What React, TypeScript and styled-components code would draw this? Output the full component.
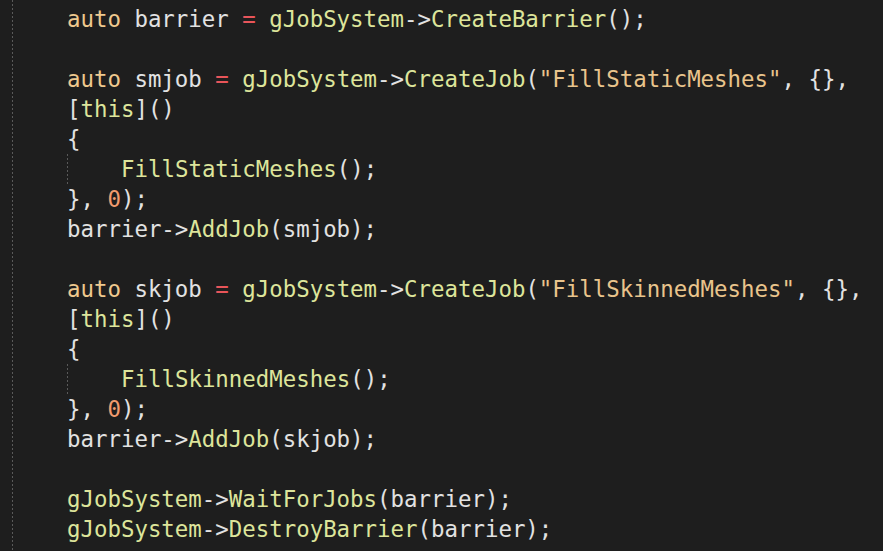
import React from "react";
import styled, { createGlobalStyle } from "styled-components";

const Global = createGlobalStyle`
  html, body { margin: 0; padding: 0; background: #1e1e1e; }
  body { width: 883px; height: 551px; overflow: hidden; }
`;

const Editor = styled.div`
  display: flex;
  height: 551px;
  background: #1e1e1e;
  padding-left: 12px;
  box-sizing: border-box;
`;

const Guide = styled.div`
  width: 1px;
  flex: none;
  background-image: linear-gradient(to bottom, #5a5a5a 50%, transparent 50%);
  background-size: 1px 4px;
`;

const Code = styled.div`
  margin-left: 54px;
  padding-top: 4px;
  font-family: "DejaVu Sans Mono", "Liberation Mono", monospace;
  font-size: 22.4px;
  color: #e2e2e2;
`;

const Line = styled.div`
  height: 30px;
  line-height: 30px;
  white-space: pre;
  display: flex;
`;

const Indent = styled.span`
  display: inline-block;
  width: 54px;
  height: 30px;
  flex: none;
  background-image: linear-gradient(to bottom, #5a5a5a 50%, transparent 50%);
  background-size: 1px 4px;
  background-repeat: repeat-y;
  background-position: 0 0;
`;

type Kind = "kw" | "fn" | "op" | "str" | "num" | "id";

const colors: Record<Kind, string> = {
  kw: "#eec98f",
  fn: "#dde59b",
  op: "#e8555a",
  str: "#e9c48c",
  num: "#f19b6e",
  id: "#e2e2e2",
};

const Tok = styled.span<{ $k: Kind }>`
  color: ${(p) => colors[p.$k]};
`;

type T = [Kind, string];

const jobLines = (v: string, name: string): T[][] => [
  [["kw", "auto"], ["id", " " + v + " "], ["op", "="], ["id", " "], ["fn", "gJobSystem"], ["id", "->"], ["fn", "CreateJob"], ["id", "("], ["str", `"${name}"`], ["id", ", {},"]],
  [["id", "["], ["fn", "this"], ["id", "]()"]],
  [["id", "{"]],
  [["fn", "@"], ["fn", name], ["id", "();"]],
  [["id", "}, "], ["num", "0"], ["id", ");"]],
  [["id", "barrier->"], ["fn", "AddJob"], ["id", "(" + v + ");"]],
];

const lines: T[][] = [
  [["kw", "auto"], ["id", " barrier "], ["op", "="], ["id", " "], ["fn", "gJobSystem"], ["id", "->"], ["fn", "CreateBarrier"], ["id", "();"]],
  [],
  ...jobLines("smjob", "FillStaticMeshes"),
  [],
  ...jobLines("skjob", "FillSkinnedMeshes"),
  [],
  [["fn", "gJobSystem"], ["id", "->"], ["fn", "WaitForJobs"], ["id", "(barrier);"]],
  [["fn", "gJobSystem"], ["id", "->"], ["fn", "DestroyBarrier"], ["id", "(barrier);"]],
];

export default function App() {
  return (
    <>
      <Global />
      <Editor>
        <Guide />
        <Code>
          {lines.map((toks, i) => (
            <Line key={i}>
              {toks.map(([k, s], j) =>
                s === "@" ? <Indent key={j} /> : <Tok key={j} $k={k}>{s}</Tok>
              )}
            </Line>
          ))}
        </Code>
      </Editor>
    </>
  );
}
